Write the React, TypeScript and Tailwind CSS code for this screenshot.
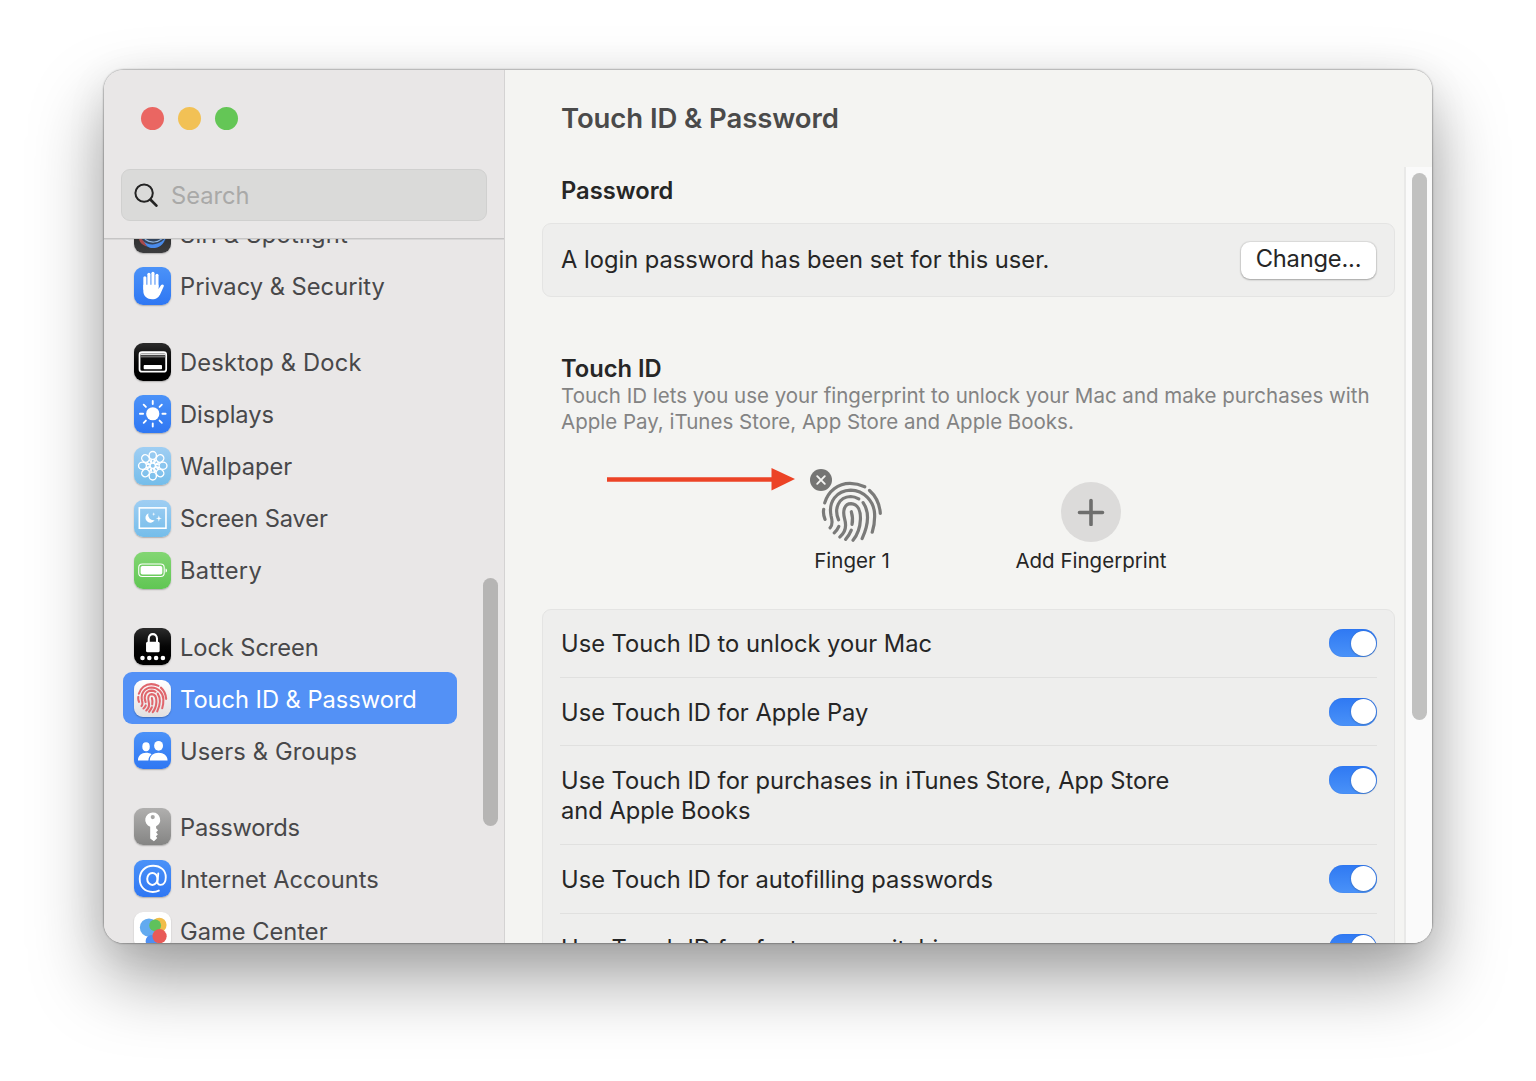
import type { ReactNode } from 'react';

const printPaths = [
  'M65 123C75 88 105 65 140 65C156 65 171 69 184 75',
  'M198 86C217 103 228 126 230 154',
  'M62 142C60 152 62 162 66 172',
  'M81 197C89 189 88 177 84 162C75 120 100 86 142 85C182 86 211 118 213 155C214 175 211 194 206 210',
  'M93 212Q102 205 107 193',
  'M106 173C92 140 106 105 142 104C152 104 159 107 166 111',
  'M179 122C198 150 194 190 176 229',
  'M110 224C126 211 131 194 124 170C117 144 125 125 143 125C163 126 172 146 171 172C170 198 162 218 149 234',
  'M127 231Q138 219 144 204',
  'M144 149C148 162 149 174 146 187',
];

function Fingerprint({ className, weight = 9.5 }: { className: string; weight?: number }) {
  return (
    <svg viewBox="54 58 184 184" className={className} fill="none" stroke="currentColor" strokeWidth={weight} strokeLinecap="round">
      {printPaths.map((d) => (
        <path key={d} d={d} />
      ))}
    </svg>
  );
}

function Tile({ className, children }: { className: string; children: ReactNode }) {
  return (
    <span className={`block size-[37.5px] shrink-0 overflow-hidden rounded-[9px] shadow-[0_1px_1.5px_rgba(0,0,0,0.25)] ${className}`}>
      {children}
    </span>
  );
}

const blue = 'bg-linear-to-b from-[#4b92f8] to-[#2f77f3]';
const sky = 'bg-linear-to-b from-[#9fcef3] to-[#74bdea]';
const black = 'bg-linear-to-b from-[#2c2c2c] via-[#060606] to-black';

const SiriIcon = () => (
  <Tile className="bg-linear-to-b from-[#222] to-[#3c3c3e]">
    <svg viewBox="0 0 38 38">
      <circle cx="19" cy="19" r="14.5" fill="#33445c" />
      <path d="M9 26C14 31 25 32 32 23C30 30 26 33.5 19 33.5C14 33.500 11 30 9 26Z" fill="#4a8bea" />
      <path d="M5 22C5 28 8 30 13 32C11 28 9 25 5 22Z" fill="#a84a4c" />
      <path d="M11 24.500C17 29 24 28 29 23.500" stroke="#8fb4df" strokeWidth="1.2" fill="none" />
    </svg>
  </Tile>
);

const HandIcon = () => (
  <Tile className={blue}>
    <svg viewBox="0 0 38 38">
      <g stroke="#fff" strokeWidth="3.1" strokeLinecap="round" fill="none">
        <path d="M11 10.8V22" />
        <path d="M15.1 7.4V20" />
        <path d="M19.2 6.4V20" />
        <path d="M23.3 8.4V20" />
      </g>
      <path
        d="M9.450 19V24.5C9.450 29.5 13.5 32.6 18.3 32.6C22.8 32.6 25.3 30.5 27 26.5L30.2 19.6C30.8 18 28.7 16.8 27.5 18.3L24.850 22.3V18H9.450Z"
        fill="#fff"
      />
    </svg>
  </Tile>
);

const DockIcon = () => (
  <Tile className={black}>
    <svg viewBox="0 0 38 38">
      <rect x="5.6" y="9.3" width="27" height="19.800" rx="2.6" fill="none" stroke="#fff" strokeWidth="1.8" />
      <path d="M6.5 11.4H32" stroke="#ddd" strokeWidth="1.8" />
      <path d="M6.5 14H32" stroke="#999" strokeWidth="1" />
      <rect x="9.8" y="22.4" width="18.6" height="4.2" rx="0.8" fill="#fff" />
    </svg>
  </Tile>
);

const DisplaysIcon = () => (
  <Tile className={blue}>
    <svg viewBox="0 0 38 38">
      <circle cx="19" cy="19" r="6.7" fill="#fff" />
      <g stroke="#fff" strokeWidth="1.9" strokeLinecap="round">
        {[0, 45, 90, 135, 180, 225, 270, 315].map((a) => (
          <path key={a} d="M19 6V9.2" transform={`rotate(${a} 19 19)`} />
        ))}
      </g>
    </svg>
  </Tile>
);

const WallpaperIcon = () => (
  <Tile className={sky}>
    <svg viewBox="0 0 38 38" fill="none" stroke="#fff" strokeWidth="1.4">
      {[0, 45, 90, 135, 180, 225, 270, 315].map((a) => (
        <g key={a} transform={`rotate(${a} 19 19)`}>
          <ellipse cx="19" cy="8.6" rx="3.7" ry="4" />
          <path d="M17 12.2L18.3 16.5M21 12.2L19.700 16.5" />
        </g>
      ))}
      <circle cx="19" cy="19" r="2.7" />
    </svg>
  </Tile>
);

const ScreenSaverIcon = () => (
  <Tile className={sky}>
    <svg viewBox="0 0 38 38">
      <rect x="5.4" y="8" width="27" height="20.6" fill="none" stroke="#fff" strokeWidth="1.6" />
      <path d="M14.6 13.4A5 5 0 1 0 21 20.3A5.4 5.4 0 0 1 14.6 13.4Z" fill="#fff" />
      <path d="M25.2 15.4L25.9 17.9L28.2 18.6L25.9 19.3L25.2 22L24.5 19.3L22.2 18.6L24.5 17.9Z" fill="#fff" />
      <path d="M20 12.4L20.4 13.9L21.8 14.3L20.4 14.7L20 16.2L19.6 14.7L18.2 14.3L19.6 13.9Z" fill="#fff" />
    </svg>
  </Tile>
);

const BatteryIcon = () => (
  <Tile className="bg-linear-to-b from-[#83d673] to-[#60c653]">
    <svg viewBox="0 0 38 38">
      <rect x="4.800" y="12.2" width="25.8" height="12.6" rx="3.6" fill="none" stroke="#fff" strokeWidth="1.1" />
      <rect x="6.7" y="14.1" width="22" height="8.8" rx="1.8" fill="#fff" />
      <path d="M32 16.6C34 17.2 34 20.2 32 20.8Z" fill="#fff" />
    </svg>
  </Tile>
);

const LockIcon = () => (
  <Tile className={black}>
    <svg viewBox="0 0 38 38">
      <path d="M14.9 15V11C14.9 4.600 23.3 4.600 23.3 11V15" fill="none" stroke="#fff" strokeWidth="2.1" />
      <rect x="12.2" y="14" width="13.8" height="10.6" rx="1.6" fill="#fff" />
      {[8.6, 15.5, 22.4, 29.3].map((x) => (
        <circle key={x} cx={x} cy="30.4" r="2.3" fill="#fff" />
      ))}
    </svg>
  </Tile>
);

const TouchIcon = () => (
  <Tile className="bg-linear-to-b from-white to-[#e2e0e0] p-[3.5px]">
    <Fingerprint className="size-[30.5px] text-[#e0666c]" weight={12.5} />
  </Tile>
);

const UsersIcon = () => (
  <Tile className={blue}>
    <svg viewBox="0 0 38 38" fill="#fff">
      <ellipse cx="12.2" cy="14.9" rx="3.8" ry="4.5" />
      <path d="M4 28.8C4 24 7.5 20.9 12.2 20.9C14.6 20.9 16.4 21.4 17.8 22.5C15.8 24 14.7 26 14.6 28.8Z" />
      <ellipse cx="24.9" cy="14" rx="4.5" ry="5" />
      <path d="M16 28.8C16 23.9 19.7 20.9 24.9 20.9C30.1 20.9 34 23.9 34 28.8Z" />
    </svg>
  </Tile>
);

const KeyIcon = () => (
  <Tile className="bg-linear-to-b from-[#b0afae] to-[#858584]">
    <svg viewBox="0 0 38 38">
      <path
        fillRule="evenodd"
        fill="#fff"
        d="M19 4.6A7.4 7.4 0 0 1 22.4 18.600V20.6L24.4 22.6L22.4 24.6L24.2 26.8L22.2 28.6L23.6 30.4L20.2 33.8L16.4 31V19A7.4 7.4 0 0 1 19 4.6ZM19 7.1A2.1 2.1 0 1 0 19 11.3A2.1 2.1 0 1 0 19 7.1Z"
      />
    </svg>
  </Tile>
);

const AtIcon = () => (
  <Tile className={blue}>
    <svg viewBox="0 0 38 38" fill="none" stroke="#fff" strokeLinecap="round">
      <path
        d="M25.2 31C23.3 32 21.4 32.4 19 32.4C11 32.4 5.8 27.2 5.8 19.3C5.8 11.4 11.4 5.8 19.4 5.8C27 5.8 32.2 10.6 32.2 17.4C32.2 22 30.2 25.2 27 25.2C24.6 25.2 23.6 23.6 23.8 21.4L24.6 13.6"
        strokeWidth="1.9"
      />
      <ellipse cx="18.6" cy="19.2" rx="5.2" ry="6.1" strokeWidth="2" />
    </svg>
  </Tile>
);

const GameIcon = () => (
  <Tile className="bg-white">
    <svg viewBox="0 0 38 38">
      <circle cx="25.6" cy="13.2" r="7.4" fill="#f1bd4a" />
      <circle cx="15.2" cy="15.8" r="9.3" fill="#62aaf0" />
      <circle cx="17.8" cy="29.4" r="6" fill="#4d8ff3" />
      <circle cx="21.4" cy="13.6" r="6" fill="#5fc15c" />
      <circle cx="25.9" cy="24.5" r="7.2" fill="#e85a58" />
    </svg>
  </Tile>
);

const groups: { label: string; icon: ReactNode; track?: string }[][] = [
  [
    { label: 'Siri & Spotlight', icon: <SiriIcon />, track: 'tracking-[0.25px]' },
    { label: 'Privacy & Security', icon: <HandIcon /> },
  ],
  [
    { label: 'Desktop & Dock', icon: <DockIcon />, track: 'tracking-[0.18px]' },
    { label: 'Displays', icon: <DisplaysIcon />, track: 'tracking-[-0.05px]' },
    { label: 'Wallpaper', icon: <WallpaperIcon /> },
    { label: 'Screen Saver', icon: <ScreenSaverIcon />, track: 'tracking-[-0.12px]' },
    { label: 'Battery', icon: <BatteryIcon />, track: 'tracking-[0.3px]' },
  ],
  [
    { label: 'Lock Screen', icon: <LockIcon />, track: 'tracking-[-0.1px]' },
    { label: 'Touch ID & Password', icon: <TouchIcon />, track: 'tracking-[-0.04px]' },
    { label: 'Users & Groups', icon: <UsersIcon />, track: 'tracking-[0.12px]' },
  ],
  [
    { label: 'Passwords', icon: <KeyIcon />, track: 'tracking-[-0.25px]' },
    { label: 'Internet Accounts', icon: <AtIcon /> },
    { label: 'Game Center', icon: <GameIcon /> },
  ],
];

const options = [
  'Use Touch ID to unlock your Mac',
  'Use Touch ID for Apple Pay',
  'Use Touch ID for purchases in iTunes Store, App Store and Apple Books',
  'Use Touch ID for autofilling passwords',
  'Use Touch ID for fast user switching',
];

function Toggle() {
  return (
    <span className="flex h-7 w-12 shrink-0 items-center justify-end rounded-full bg-linear-to-b from-[#2f79f3] to-[#4a92f8] pr-[1.5px] shadow-[inset_0_0_1px_rgba(0,60,180,0.4)]">
      <span className="size-[25px] rounded-full bg-white shadow-[0_0.5px_2px_rgba(0,0,0,0.3)]" />
    </span>
  );
}

function Sidebar() {
  return (
    <aside className="relative flex w-[401px] shrink-0 flex-col border-r border-[#d4d3d3] bg-[#e9e7e7]">
      <div className="flex h-[99px] shrink-0 items-start gap-[14px] pt-[37px] pl-[36.5px]">
        <span className="size-[23px] rounded-full bg-[#ea6662]" />
        <span className="size-[23px] rounded-full bg-[#f2c155]" />
        <span className="size-[23px] rounded-full bg-[#64c656]" />
      </div>
      <div className="ml-[16.5px] flex h-[52px] w-[366px] shrink-0 items-center rounded-[9px] border border-[#d0d0cf] bg-[#dadad9] pl-3">
        <svg viewBox="0 0 24 24" className="size-6" fill="none" stroke="#232323" strokeLinecap="round">
          <circle cx="10.1" cy="10.1" r="8.700" strokeWidth="2" />
          <path d="M16.6 16.8L22.4 22.6" strokeWidth="2.7" />
        </svg>
        <span className="ml-[13.5px] pt-[2px] text-[23.7px] leading-none text-[#a9a9a8]">Search</span>
      </div>
      <div className="mt-[17px] h-px shrink-0 bg-[#c6c5c5] shadow-[0_1px_0_#d8d7d7]" />
      <nav className="flex min-h-0 flex-1 flex-col gap-6 overflow-hidden pl-[19px]">
        {groups.map((group, i) => (
          <div key={i} className={i === 0 ? '-mt-[31px]' : ''}>
            {group.map(({ label, icon, track }) => (
              <div
                key={label}
                className={`flex h-[52.05px] w-[334px] items-center rounded-[9px] pl-[10.500px] text-[23.7px] ${track ?? ''} ${
                  label === 'Touch ID & Password' ? 'bg-[#5391f6] text-white' : 'text-[#48484a]'
                }`}
              >
                {icon}
                <span className="ml-[9px] pt-[2px] leading-none whitespace-nowrap">{label}</span>
              </div>
            ))}
          </div>
        ))}
      </nav>
      <span className="absolute top-[508px] right-[6px] h-[248px] w-[15px] rounded-full bg-[#b6b5b4]" />
    </aside>
  );
}

export default function App() {
  return (
    <div className="h-[1081px] w-full overflow-hidden bg-white pt-[70px] pl-[104px] font-[Inter,sans-serif]">
      <div className="flex h-[873px] w-[1328px] rounded-[20px] shadow-[0_0_1.5px_1px_rgba(0,0,0,0.26),0_8px_40px_rgba(0,0,0,0.08),0_36px_72px_rgba(0,0,0,0.36)]">
        <div className="flex min-w-0 flex-1 overflow-hidden rounded-[19px]">
          <Sidebar />
          <main className="flex min-w-0 flex-1 flex-col bg-[#f4f4f2]">
            <h1 className="h-[97px] shrink-0 pt-[31px] pl-[56px] text-[27.5px] leading-[34px] font-semibold tracking-[-0.08px] text-[#4a4a4a]">
              Touch ID &amp; Password
            </h1>
            <div className="flex min-h-0 flex-1">
              <div className="min-w-0 flex-1 pl-[37px] text-[23.7px] text-[#262626]">
                <h2 className="pt-[9px] pl-[19px] leading-[30px] font-semibold">Password</h2>
                <div className="mt-[17px] flex h-[74px] w-[853px] items-center justify-between rounded-[9px] border border-[#e4e4e3] bg-[#eeeeed] pr-[18px] pl-[18px]">
                  <span className="-mt-px tracking-[-0.01px]">A login password has been set for this user.</span>
                  <span className="flex h-[37px] w-[135px] items-center justify-center rounded-[9px] bg-white pb-[2px] tracking-[-0.2px] shadow-[0_0_1px_0.5px_rgba(0,0,0,0.08),0_1px_2px_rgba(0,0,0,0.25)]">
                    Change...
                  </span>
                </div>
                <h2 className="mt-[57px] pl-[19px] leading-[30px] font-semibold">Touch ID</h2>
                <p className="-mt-px pl-[19px] text-[20.500px] leading-[26px] whitespace-nowrap text-[#838383]">
                  Touch ID lets you use your fingerprint to unlock your Mac and make purchases with
                  <br />
                  Apple Pay, iTunes Store, App Store and Apple Books.
                </p>
                <div className="flex h-[174px] items-start pt-[32px] pl-[65px] text-[20.5px] text-[#262626]">
                  <svg viewBox="0 0 188 24" className="h-6 w-[188px] shrink-0">
                    <path d="M0 12.5H168" stroke="#ec4326" strokeWidth="4.6" />
                    <path d="M164.500 1L188 12L164.500 23.500Z" fill="#ec4326" />
                  </svg>
                  <div className="relative ml-[7px] flex w-[100px] shrink-0 flex-col items-center pt-[14px]">
                    <Fingerprint className="size-[62px] text-[#7a7a79]" />
                    <span className="mt-[6px] leading-6 whitespace-nowrap">Finger 1</span>
                    <svg viewBox="0 0 24 24" className="absolute top-[1px] left-[7px] size-6">
                      <circle cx="12" cy="12" r="11" fill="#757574" />
                      <path d="M8.2 8.200L15.8 15.800M15.800 8.200L8.200 15.800" stroke="#f4f4f2" strokeWidth="1.900" strokeLinecap="round" />
                    </svg>
                  </div>
                  <div className="ml-[109px] flex w-[160px] flex-col items-center pt-[15px]">
                    <span className="flex size-[60px] items-center justify-center rounded-full bg-[#dcdbda]">
                      <svg viewBox="0 0 28 28" className="size-7" stroke="#6e6e6d" strokeWidth="3.600" strokeLinecap="round">
                        <path d="M14 2.500V26.500M2.500 14.500H25.500" />
                      </svg>
                    </span>
                    <span className="mt-[7px] leading-6 whitespace-nowrap">Add Fingerprint</span>
                  </div>
                </div>
                <div className="w-[853px] rounded-t-[9px] border border-[#e4e4e3] bg-[#eeeeed] px-[17px]">
                  {options.map((text, i) => (
                    <div
                      key={text}
                      className={`flex items-start justify-between pb-[18px] leading-[29.700px] ${i ? 'border-t border-[#e0e0df] pt-[20px]' : 'pt-[19px]'}`}
                    >
                      <span className="w-[640px] pl-px">{text}</span>
                      <Toggle />
                    </div>
                  ))}
                </div>
              </div>
              <div className="flex w-[28px] shrink-0 justify-center border-l-2 border-[#e9e9e8] bg-[#fafafa] pt-[6px]">
                <span className="h-[547px] w-[15px] rounded-full bg-[#c1c1c0]" />
              </div>
            </div>
          </main>
        </div>
      </div>
    </div>
  );
}
